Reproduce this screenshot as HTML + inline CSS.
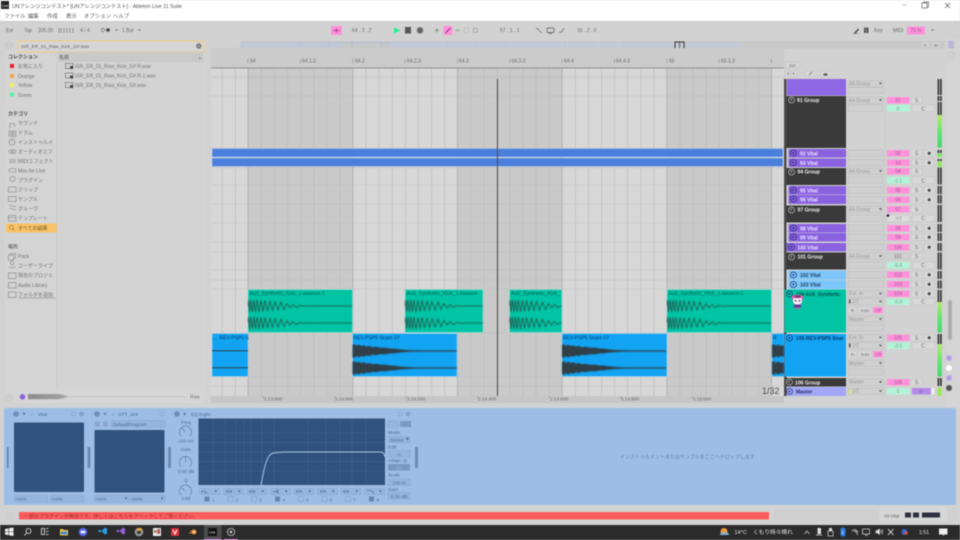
<!DOCTYPE html>
<html lang="ja"><head><meta charset="utf-8"><title>UNアレンジコンテスト - Ableton Live 11 Suite</title>
<style>
html,body{margin:0;padding:0;width:960px;height:540px;overflow:hidden;background:#d2d2d2}
svg{display:block;position:absolute;left:0;top:0;filter:blur(.45px)}
text{font-family:"Liberation Sans","Noto Sans CJK JP",sans-serif;font-size:5px;fill:#747474}
.d{fill:#5c5c5c}.h{fill:#4a4a4a;font-weight:bold;font-size:5px}.b{fill:#555;font-size:5.25px}
.m{fill:#5c5c5c;font-size:5.4px}.w{fill:#f0f0f0;font-weight:bold;font-size:5.1px}
.v{fill:#ece6ff;font-weight:bold;font-size:5.1px}.lv{fill:#1f3f60;font-weight:bold;font-size:5.1px}
.c{text-anchor:middle}.g{fill:#999}.n{fill:#6c6c6c;font-size:5px;text-anchor:middle}.pn{fill:#a2549a;font-size:5px;text-anchor:middle}
.clip{fill:#005e52;font-size:5.2px}.clipb{fill:#063f70;font-size:5px}
.dv{fill:#4c6c98;font-size:4.8px}.tb{fill:#e2e2e2;font-size:5.2px}
.f{fill:#d0d0d0;stroke:#bfbfbf;stroke-width:.6}.p{fill:#ff92da}.s{fill:#d8d8d8;stroke:#c4c4c4;stroke-width:.5}
.gr{fill:#b3f3d8}.fd{fill:#95b5e0;stroke:#86a6d3;stroke-width:.6}.r{fill:#6a6a6a;font-size:5px}.tr{fill:#6a6a6a;font-size:4.7px}
</style></head><body>
<svg width="960" height="540" viewBox="0 0 960 540" xmlns="http://www.w3.org/2000/svg">
<defs>
<pattern id="gl" x="248" y="0" width="13.08" height="10" patternUnits="userSpaceOnUse"><rect width=".7" height="10" fill="#b8b8b8"/></pattern>
<symbol id="kick" viewBox="0 -9 104 18" width="104" height="18" overflow="hidden"><path d="M0 0L.7-6 1.5 6 3-6 4.5 6 6-6 7.5 6 9-6 11 6 13-5.5 15 5.5 17-5.5 19.5 5 22-5 24.5 4.5 27-4.5 30 4 33-4 36 3.5 39-2.5 42 2 45-1.5 48 1.5 52-.5 56 .3 60 0H104" fill="none" stroke="#2f4440" stroke-width=".75"/></symbol>
<symbol id="snare" viewBox="0 -9 104 18" width="104" height="18" overflow="hidden"><path d="M0-6 2-7 4-5 6-6.5 9-5 11-5.8 14-4.5 17-5 20-3.8 24-4.2 28-3.2 33-3.4 37-2.5 42-2.4 47-1.6 53-1.1 60-.8 70-.6H104V.6H70L60 .8 53 1.1 47 1.6 42 2.4 37 2.5 33 3.4 28 3.2 24 4.2 20 3.8 17 5 14 4.5 11 5.8 9 5 6 6.5 4 5 2 7 0 6Z" fill="#33363a" opacity=".92"/></symbol>
<symbol id="ti" viewBox="0 0 8 8" width="8" height="8"><circle cx="4" cy="4" r="3" fill="none" stroke="#27306f" stroke-width=".7"/><path d="M3.2 2.6L5.3 4 3.2 5.4Z" fill="#27306f"/></symbol>
<symbol id="tg" viewBox="0 0 8 8" width="8" height="8"><circle cx="4" cy="4" r="3" fill="none" stroke="#c4c4c4" stroke-width=".7"/><path d="M2.8 3H5M3.5 3V5.2" stroke="#c4c4c4" stroke-width=".6" fill="none"/></symbol>
<linearGradient id="mt" x1="0" y1="0" x2="0" y2="1"><stop offset="0" stop-color="#b6e86a"/><stop offset=".6" stop-color="#56e470"/><stop offset="1" stop-color="#47d66e"/></linearGradient>
<linearGradient id="pv" x1="0" y1="0" x2="1" y2="0"><stop offset="0" stop-color="#8d8d8d"/><stop offset=".8" stop-color="#a0a0a0"/><stop offset="1" stop-color="#b8b8b8"/></linearGradient>
</defs>

<!-- base -->
<rect width="960" height="540" fill="#d2d2d2"/>
<rect width="960" height="21" fill="#fff"/><rect y="21" width="960" height="1" fill="#c8c8c8"/>
<rect x="1" y="1" width="8" height="8" fill="#222"/><text x="2" y="7" style="font-size:3.5px;fill:#eee">Live</text>
<text x="12" y="8" class="b">UNアレンジコンテスト* [UNアレンジコンテスト] - Ableton Live 11 Suite</text>
<text x="4" y="18" class="m">ファイル</text><text x="28" y="18" class="m">編集</text><text x="47" y="18" class="m">作成</text><text x="66" y="18" class="m">表示</text><text x="84" y="18" class="m">オプション</text><text x="113" y="18" class="m">ヘルプ</text>
<path d="M902 5h5" stroke="#bbb" stroke-width=".8"/><path d="M922 3h5v5h-5zM923.500 3V2h5v5h-1.500" fill="none" stroke="#666" stroke-width=".7"/><path d="M945 3l5 5M950 3l-5 5" stroke="#666" stroke-width=".8"/>

<!-- control bar -->
<text x="6" y="32" class="r">Ext</text><text x="24" y="32" class="r">Tap</text><text x="38" y="32" class="r">205.00</text>
<path d="M59 28v5M61 28v5M64 28v5M67 28v5M70 28v5M73 28v5" stroke="#777" stroke-width=".7"/>
<text x="80" y="32" class="r">4  /  4</text><circle cx="103" cy="30" r="1.600" fill="none" stroke="#666" stroke-width=".6"/><circle cx="108" cy="30" r="1.800" fill="#444"/><path d="M115 29.500h3l-1.500 1.500z" fill="#666"/>
<text x="122" y="32" class="r">1 Bar</text><path d="M138 29.500h3l-1.500 1.500z" fill="#666"/>
<rect x="331" y="26" width="11" height="9" class="p"/><path d="M333 30.500h7M336.500 28v5" stroke="#a03088" stroke-width=".7"/>
<text x="352" y="32" class="r">64 .  3 .  2</text>
<path d="M394 27.500l6.500 3-6.500 3z" fill="#22f08a"/><rect x="405" y="27" width="6" height="6.500" fill="#555"/><circle cx="420" cy="30.300" r="3.200" fill="#666"/>
<path d="M434.500 30.300h4.500M436.800 28v4.500" stroke="#777" stroke-width=".7"/>
<rect x="443.500" y="26" width="9" height="9" class="p"/><path d="M445.500 33l5-5" stroke="#8a3080" stroke-width="1"/>
<path d="M455 30.300h5M457.500 28.500v3.600" stroke="#999" stroke-width=".6"/><rect x="464" y="28" width="4.500" height="4.500" fill="none" stroke="#aaa" stroke-width=".5" stroke-dasharray="1 .6"/><circle cx="475.500" cy="30.300" r="2.200" fill="none" stroke="#888" stroke-width=".6"/>
<text x="500" y="32" class="r">57 .  1 .  1</text><path d="M536 28.500q2 0 3 2t3 2" fill="none" stroke="#666" stroke-width=".7"/><rect x="547" y="28" width="7" height="4.500" rx="1" fill="none" stroke="#555" stroke-width=".7"/><path d="M549 32.500l1.500 1.500 1.500-1.500" fill="none" stroke="#555" stroke-width=".6"/><path d="M559 32.500q3 0 3.500-2t2-2" fill="none" stroke="#666" stroke-width=".7"/>
<text x="577" y="32" class="r">16 .  2 .  0</text>
<path d="M854 33l4-4.500 1 1-4 4.500z" fill="#444"/><path d="M853 33.500h6" stroke="#666" stroke-width=".5"/><rect x="864" y="27.500" width="4.500" height="5.500" fill="#555"/><path d="M866.200 27.500v5.500" stroke="#ddd" stroke-width=".4"/><text x="874" y="32" class="r">Key</text><text x="893" y="32" class="r">MIDI</text>
<rect x="907" y="26.500" width="18" height="8" class="p"/><text x="916" y="32.200" class="c pn">79 %</text><path d="M931 29.500h3l-1.500 1.500z" fill="#666"/>

<!-- browser -->
<rect x="5" y="40" width="201" height="363" rx="2" fill="#d4d4d4"/>
<circle cx="9" cy="45" r="4" fill="#cdcdcd" stroke="#c5c5c5" stroke-width=".5"/>
<rect x="18" y="41" width="186" height="11" fill="#d6d6d6" stroke="#f5c77e" stroke-width="1"/>
<text x="21" y="48" style="fill:#5e5e5e;font-size:4.800px">ISR_ER_01_Raw_Kick_G#.wav</text><circle cx="198.800" cy="46" r="2.700" fill="#777"/><path d="M197.800 45l2 2M199.800 45l-2 2" stroke="#ddd" stroke-width=".5"/>
<rect x="57" y="52" width="147" height="336" fill="#d3d3d3"/><rect x="56.500" y="52" width=".6" height="336" fill="#c6c6c6"/>
<rect x="58" y="52" width="146" height="10" fill="#c9c9c9"/><text x="59" y="59" class="h" style="font-weight:normal">名前</text><path d="M198.500 59h3l-1.500-2.500z" fill="#999"/>
<g fill="none" stroke="#666" stroke-width=".6"><rect x="65.500" y="63.500" width="7.500" height="5"/><rect x="65.500" y="73" width="7.500" height="5"/><rect x="65.500" y="82.500" width="7.500" height="5"/></g>
<g fill="#444"><rect x="70" y="66" width="3" height="3"/><rect x="70" y="75.500" width="3" height="3"/><rect x="70" y="85" width="3" height="3"/></g>
<text x="75" y="68">ISR_ER_01_Raw_Kick_G# R.wav</text><text x="75" y="77.500">ISR_ER_01_Raw_Kick_G# R-1.wav</text><text x="75" y="87">ISR_ER_01_Raw_Kick_G#.wav</text>
<text x="8" y="58.500" class="h">コレクション</text>
<rect x="10" y="64" width="4" height="4" fill="#ee1c24"/><rect x="10" y="74" width="4" height="4" fill="#f2a64c"/><rect x="10" y="83" width="4" height="4" fill="#f5ec5a"/><rect x="10" y="92.500" width="4" height="4" fill="#4ff5a0"/>
<text x="18" y="68">お気に入り</text><text x="18" y="78">Orange</text><text x="18" y="87">Yellow</text><text x="18" y="97">Green</text>
<text x="8" y="115.500" class="h">カテゴリ</text>
<text x="18" y="125">サウンド</text><text x="18" y="134.500">ドラム</text><text x="18" y="144">インストゥルメ</text><text x="18" y="153.500">オーディオエフ</text><text x="18" y="163">MIDIエフェクト</text><text x="18" y="172.500">Max for Live</text><text x="18" y="182">プラグイン</text><text x="18" y="191.500">クリップ</text><text x="18" y="201">サンプル</text><text x="18" y="210.500">グルーヴ</text><text x="18" y="220">テンプレート</text>
<rect x="6" y="223.500" width="50.500" height="9" fill="#fbc368"/><text x="18" y="229.800" style="fill:#6e5628">すべての結果</text><circle cx="11.500" cy="227.500" r="2" fill="none" stroke="#8a6e30" stroke-width=".6"/><path d="M13 229l1.500 1.500" stroke="#8a6e30" stroke-width=".6"/>
<g fill="none" stroke="#808080" stroke-width=".6">
<path d="M10 123.500v4M10 123.500h4.500v3M9 127.500h1.500M13.500 126.500h1.500"/>
<path d="M9 131h3v2H9zM13 131h3v2h-3zM9 134.500h3v2H9zM13 134.500h3v2h-3z"/>
<circle cx="12" cy="142" r="3"/><path d="M12 140v2"/>
<ellipse cx="12.500" cy="151.500" rx="3.500" ry="2"/><circle cx="12.500" cy="151.500" r="1"/>
<path d="M9 159.500h7M9 161h7M9 162.500h7"/>
<rect x="9" y="168.500" width="7" height="3.500" rx="1.700"/>
<circle cx="12.500" cy="179" r="2.600"/>
<rect x="8.500" y="187" width="7.500" height="5"/><rect x="8.500" y="196.500" width="7.500" height="5"/>
<path d="M9 206q2-1.500 3.500 0t3.500 0M9 209q2-1.500 3.500 0t3.500 0"/>
<rect x="8.500" y="215.500" width="7.500" height="5.500"/><path d="M8.500 217.500h7.500"/>
<rect x="8.500" y="255" width="5" height="5"/><path d="M10 255v-1.500h5.500v5h-2"/>
<circle cx="12.200" cy="263" r="1.800"/><path d="M9 267.500h6.500"/>
<rect x="8.500" y="273" width="7.500" height="5.500"/><rect x="8.500" y="282.500" width="7.500" height="5.500"/><rect x="8.500" y="292" width="7.500" height="5.500"/>
</g>
<text x="8" y="248.500" class="h" style="font-weight:normal">場所</text>
<text x="18" y="258">Pack</text><text x="18" y="267.500">ユーザーライブ</text><text x="18" y="277">現在のプロジェ</text><text x="18" y="287">Audio Library</text><text x="18" y="296.500">フォルダを追加</text><path d="M18 298h37.500" stroke="#808080" stroke-width=".5"/>
<!-- preview -->
<circle cx="9" cy="398" r="4" fill="#cfcfcf" stroke="#c8c8c8" stroke-width=".5"/>
<rect x="18" y="392" width="186" height="11" fill="#d6d6d6"/><circle cx="22.500" cy="396.800" r="2.800" fill="#8c66d8"/>
<path d="M28 394h30l5 .8 4 1.200 3 .6-3 .6-4 1-5 1H28z" fill="url(#pv)"/><path d="M70 396.800h116" stroke="#b2b2b2" stroke-width=".5"/>
<rect x="188" y="393.500" width="14" height="6.500" fill="#dcdcdc" stroke="#c6c6c6" stroke-width=".4"/><text x="195" y="398.600" class="n">Raw</text>

<!-- overview -->
<rect x="211" y="41" width="734" height="7.500" fill="#c8c8c8"/>
<rect x="211" y="41" width="30" height="7.500" fill="#d2d2d2"/>
<path d="M241 42.500H560M241 42.500V47.500M300 42.500V47.500M329 42.500V47.500M352 42.500V47.500M381.500 42.500V47.500M388 42.500V47.500M447 42.500V47.500M476 42.500V47.500M506 42.500V47.500M565 42.500V47.500M594 42.500V47.500M623 42.500V47.500M680 42.500V47.500" stroke="#9fb1d4" stroke-width=".6" fill="none"/>
<rect x="241" y="42.500" width="100" height="5" fill="#bccae2" opacity=".6"/><rect x="388" y="42.500" width="290" height="5" fill="#bfcce3" opacity=".55"/><rect x="686" y="42.500" width="55" height="5" fill="#c0cbe0" opacity=".6"/>
<rect x="675" y="42" width="9" height="6.500" fill="none" stroke="#333" stroke-width="1"/><path d="M679.500 42v6.500" stroke="#333" stroke-width=".6"/>
<rect x="921" y="42" width="8" height="6" fill="#d6d6d6" stroke="#bbb" stroke-width=".4"/><text x="925" y="47" class="n" style="font-size:4.500px">H</text><rect x="932" y="42" width="8" height="6" fill="#d6d6d6" stroke="#bbb" stroke-width=".4"/><text x="936" y="47" class="n" style="font-size:4.500px">W</text>

<!-- ruler -->
<rect x="211" y="48" width="573" height="20" fill="#cbcbcb"/>
<rect x="211" y="67.500" width="573" height="1" fill="#8f8f8f"/>
<text x="250" y="62.500" class="r">64</text><text x="302" y="62.500" class="r">64.1.3</text><text x="355" y="62.500" class="r">64.2</text><text x="407" y="62.500" class="r">64.2.3</text><text x="459" y="62.500" class="r">64.3</text><text x="511.500" y="62.500" class="r">64.3.3</text><text x="564" y="62.500" class="r">64.4</text><text x="616" y="62.500" class="r">64.4.3</text><text x="669" y="62.500" class="r">65</text><text x="721" y="62.500" class="r">65.1.3</text>
<path d="M248 59v4M300.400 59v4M352.800 59v4M405 59v4M457.400 59v4M509.800 59v4M562 59v4M614.400 59v4M666.800 59v4M719 59v4M771.500 59v4" stroke="#888" stroke-width=".6"/>

<!-- arrangement grid -->
<rect x="211" y="68.500" width="573" height="328" fill="#d7d7d7"/>
<g fill="#c9c9c9"><rect x="248" y="68.500" width="104.700" height="328"/><rect x="457.400" y="68.500" width="104.700" height="328"/><rect x="666.800" y="68.500" width="104.700" height="328"/></g>
<rect x="211" y="68.500" width="573" height="328" fill="url(#gl)" opacity=".8"/>
<rect x="211" y="75.500" width="573" height="3" fill="#a9a9a9" opacity=".15"/>
<path d="M211 96H784M211 148H784M211 167.500H784M211 185H784M211 204H784M211 223H784M211 242H784M211 252H784M211 270H784M211 280H784M211 289H784M211 333H784M211 377H784M211 386H784" stroke="#c0c0c0" stroke-width=".6"/>
<path d="M248 68.500V396M352.800 68.500V396M457.400 68.500V396M562 68.500V396M666.800 68.500V396M771.500 68.500V396" stroke="#adadad" stroke-width=".7"/>
<!-- blue clips -->
<rect x="212" y="148.500" width="571" height="8.500" fill="#4a7fdc" stroke="#c7d5ee" stroke-width=".5"/>
<rect x="212" y="158" width="571" height="8.500" fill="#4a7fdc" stroke="#c7d5ee" stroke-width=".5"/>
<!-- teal clips -->
<g fill="#00c4a4" stroke="#bfe9df" stroke-width=".5">
<rect x="248" y="289.500" width="104.500" height="43"/><rect x="405" y="289.500" width="78" height="43"/><rect x="509.500" y="289.500" width="52.500" height="43"/><rect x="667" y="289.500" width="104.500" height="43"/>
</g>
<svg x="248" y="297" width="104" height="18"><use href="#kick"/></svg><svg x="248" y="314" width="104" height="18"><use href="#kick"/></svg>
<svg x="405" y="297" width="78" height="18"><use href="#kick"/></svg><svg x="405" y="314" width="78" height="18"><use href="#kick"/></svg>
<svg x="509.500" y="297" width="52" height="18"><use href="#kick"/></svg><svg x="509.500" y="314" width="52" height="18"><use href="#kick"/></svg>
<svg x="667" y="297" width="104" height="18"><use href="#kick"/></svg><svg x="667" y="314" width="104" height="18"><use href="#kick"/></svg>
<text x="249.500" y="295" class="clip">Au5_Synthetic_Kick_1-bounce-1</text><text x="406.500" y="295" class="clip">Au5_Synthetic_Kick_1-bounce-</text><text x="511" y="295" class="clip">Au5_Synthetic_Kick_</text><text x="668.500" y="295" class="clip">Au5_Synthetic_Kick_1-bounce-1</text>
<!-- snare clips -->
<g fill="#12a4f2" stroke="#bcdff5" stroke-width=".5">
<rect x="212" y="333.500" width="36" height="43"/><rect x="352.500" y="333.500" width="104.500" height="43"/><rect x="562" y="333.500" width="105" height="43"/><rect x="772" y="333.500" width="12" height="43"/>
</g>
<rect x="212" y="350.300" width="36" height=".9" fill="#333"/><rect x="212" y="367.300" width="36" height=".9" fill="#333"/>
<svg x="352.500" y="342" width="104" height="18"><use href="#snare"/></svg><svg x="352.500" y="359" width="104" height="18"><use href="#snare"/></svg>
<svg x="562" y="342" width="105" height="18"><use href="#snare"/></svg><svg x="562" y="359" width="105" height="18"><use href="#snare"/></svg>
<svg x="772" y="342" width="12" height="18"><use href="#snare"/></svg><svg x="772" y="359" width="12" height="18"><use href="#snare"/></svg>
<text x="214" y="339.500" class="clipb">... REV-PSP5 S</text><text x="353.500" y="339.500" class="clipb">REV-PSP5 Snare 07</text><text x="563" y="339.500" class="clipb">REV-PSP5 Snare 07</text><text x="773" y="339.500" class="clipb">R</text>
<!-- playhead -->
<rect x="497" y="79" width="1" height="317" fill="#4c4c4c"/>
<!-- time ruler -->
<rect x="211" y="396" width="573" height="7" fill="#c6c6c6"/>
<text x="264" y="400.500" class="tr">1:13:800</text><text x="335" y="400.500" class="tr">1:14:000</text><text x="407" y="400.500" class="tr">1:14:200</text><text x="478" y="400.500" class="tr">1:14:400</text><text x="550" y="400.500" class="tr">1:14:600</text><text x="621" y="400.500" class="tr">1:14:800</text><text x="693" y="400.500" class="tr">1:15:000</text>
<path d="M263.500 396v3M335 396v3M406.500 396v3M478 396v3M549.500 396v3M621 396v3M692.500 396v3" stroke="#888" stroke-width=".5"/>
<text x="762" y="394" style="font-size:9px;fill:#4a4a4a">1/32</text>

<!-- track headers -->
<rect x="784" y="79" width="2.500" height="317" fill="#4a4a4a"/>
<rect x="785" y="62" width="15" height="6" rx="3" fill="#d8d8d8" stroke="#bbb" stroke-width=".5"/><text x="792.500" y="66.800" class="n" style="font-size:4.300px">Set</text>
<g fill="#d8d8d8" stroke="#bfbfbf" stroke-width=".4"><rect x="785" y="71" width="5" height="5"/><rect x="791.500" y="71" width="5" height="5"/><rect x="805" y="71" width="11" height="5"/><rect x="820" y="71" width="11" height="5"/></g>
<path d="M788.500 72.500l-1.500 1 1.500 1zM793 72.500l1.500 1-1.500 1z" fill="#555"/><path d="M809 75l3-3" stroke="#555" stroke-width=".6"/><path d="M823.500 75.500v-2h4v2z" fill="#555"/>
<rect x="787" y="79" width="59" height="16.500" fill="#8c68e4"/>
<rect x="786.500" y="96" width="59.500" height="52" fill="#3a3a3a"/>
<use href="#tg" x="787.500" y="96"/><text x="797" y="102" class="w">91 Group</text>
<g fill="#8a62e0"><rect x="788.500" y="149" width="57.500" height="8.500"/><rect x="788.500" y="158.500" width="57.500" height="8.500"/><rect x="788.500" y="186" width="57.500" height="8.500"/><rect x="788.500" y="195" width="57.500" height="9"/><rect x="788.500" y="224" width="57.500" height="8.500"/><rect x="788.500" y="233" width="57.500" height="8.500"/><rect x="786.500" y="243" width="59.500" height="8.500"/></g>
<g fill="#3a3a3a"><rect x="786.500" y="168" width="59.500" height="17"/><rect x="786.500" y="205.500" width="59.500" height="17"/><rect x="786.500" y="252.500" width="59.500" height="17"/></g>
<g fill="#7cc6fb"><rect x="788.500" y="270.500" width="57.500" height="9"/><rect x="788.500" y="280" width="57.500" height="9"/></g>
<rect x="784.500" y="289.500" width="61.500" height="43" fill="#00c4a4"/>
<rect x="784.500" y="334" width="61.500" height="42.500" fill="#12a4f2"/>
<rect x="786.500" y="378" width="59.500" height="8.500" fill="#3a3a3a"/>
<rect x="786.500" y="387" width="59.500" height="9" fill="#a2a8f8"/>
<use href="#ti" x="789.500" y="149"/><text x="800" y="155.300" class="v">92 Vital</text>
<use href="#ti" x="789.500" y="158.500"/><text x="800" y="164.800" class="v">93 Vital</text>
<use href="#tg" x="787.500" y="168"/><text x="797.500" y="173.500" class="w">94 Group</text>
<use href="#ti" x="789.500" y="186"/><text x="800" y="192.300" class="v">95 Vital</text>
<use href="#ti" x="789.500" y="195"/><text x="800" y="201.500" class="v">96 Vital</text>
<use href="#tg" x="787.500" y="206"/><text x="797.500" y="211.500" class="w">97 Group</text>
<use href="#ti" x="789.500" y="224"/><text x="800" y="230.300" class="v">98 Vital</text>
<use href="#ti" x="789.500" y="233"/><text x="800" y="239.300" class="v">99 Vital</text>
<use href="#ti" x="787.500" y="243"/><text x="797.500" y="249.300" class="v">100 Vital</text>
<use href="#tg" x="787.500" y="253"/><text x="797.500" y="258.500" class="w">101 Group</text>
<use href="#ti" x="789.500" y="271"/><text x="800" y="277" class="lv">102 Vital</text>
<use href="#ti" x="789.500" y="280.500"/><text x="800" y="286.500" class="lv">103 Vital</text>
<use href="#ti" x="785.500" y="290"/><text x="796" y="295.800" style="fill:#044f48;font-weight:bold;font-size:5px">104 Au5_Synthetic</text>
<use href="#ti" x="785.500" y="334"/><text x="796" y="340" class="lv" style="fill:#0c3a6a">105 REV-PSP5 Snar</text>
<use href="#tg" x="785.500" y="378"/><text x="795" y="384.500" class="w">106 Group</text>
<use href="#ti" x="785.500" y="387.500"/><text x="796" y="393.500" class="lv" style="fill:#27306f">Master</text>
<!-- mascot -->
<rect x="791.500" y="295" width="12" height="6" rx="3" fill="#d85caf"/><circle cx="797.500" cy="300.500" r="4.600" fill="#f8eaf2"/><rect x="794.500" y="295.500" width="6" height="2.500" fill="#8c2f78"/><circle cx="795.800" cy="300.800" r=".8" fill="#4a2a5a"/><circle cx="799.400" cy="300.800" r=".8" fill="#4a2a5a"/><rect x="794" y="304.500" width="7" height="3" fill="#6a3a9a"/><rect x="795" y="307.500" width="2" height="1.500" fill="#e060b0"/><rect x="798" y="307.500" width="2" height="1.500" fill="#e060b0"/>

<!-- mixer columns -->
<rect class="f" x="848" y="81" width="35" height="6"/><rect class="f" x="848" y="87.500" width="35" height="6"/>
<rect class="f" x="848" y="97" width="35" height="6.500"/><rect class="f" x="848" y="105" width="35" height="6.500"/>
<rect class="f" x="848" y="150" width="35" height="6.500"/><rect class="f" x="848" y="159.500" width="35" height="6.500"/>
<rect class="f" x="848" y="168" width="35" height="6.500"/><rect class="f" x="848" y="177" width="35" height="6.500"/>
<rect class="f" x="848" y="187" width="35" height="6.500"/><rect class="f" x="848" y="196.500" width="35" height="6.500"/>
<rect class="f" x="848" y="206" width="35" height="6.500"/><rect class="f" x="848" y="215" width="35" height="6.500"/>
<rect class="f" x="848" y="225" width="35" height="6.500"/><rect class="f" x="848" y="234" width="35" height="6.500"/><rect class="f" x="848" y="244" width="35" height="6.500"/>
<rect class="f" x="848" y="253" width="35" height="6.500"/><rect class="f" x="848" y="262" width="35" height="6.500"/>
<rect class="f" x="848" y="271.500" width="35" height="6.500"/><rect class="f" x="848" y="281" width="35" height="6.500"/>
<rect class="f" x="848" y="290.500" width="35" height="6.500"/><rect class="f" x="848" y="298.500" width="35" height="6.500"/><rect class="f" x="848" y="316" width="35" height="6.500"/><rect class="f" x="848" y="325" width="35" height="6"/>
<rect class="f" x="848" y="334.500" width="35" height="6.500"/><rect class="f" x="848" y="342.500" width="35" height="6.500"/><rect class="f" x="848" y="360" width="35" height="6.500"/><rect class="f" x="848" y="369" width="35" height="6"/>
<rect class="f" x="848" y="379" width="35" height="6.500"/><rect class="f" x="848" y="388" width="35" height="6.500"/>
<text x="849" y="85.600" class="g">All-Group</text><text x="849" y="102" class="g">All-Group</text><text x="849" y="173" class="g">All-Group</text><text x="849" y="211" class="g">All-Group</text><text x="849" y="258" class="g">All-Group</text>
<text x="849" y="295.200" class="g">Ext. In</text><text x="849" y="339.200" class="g">Ext. In</text><text x="852" y="303.200" class="g">1/2</text><text x="852" y="347.200" class="g">1/2</text><text x="849" y="321" class="g">Master</text><text x="849" y="365" class="g">Master</text><text x="849" y="383.700" class="g">Master</text><text x="852" y="392.700" class="g">1/2</text>
<path d="M879 82.800h3l-1.500 2zM879 99.200h3l-1.500 2zM879 170.200h3l-1.500 2zM879 208.200h3l-1.500 2zM879 255.200h3l-1.500 2zM879 292.700h3l-1.500 2zM879 300.700h3l-1.500 2zM879 318.200h3l-1.500 2zM879 336.700h3l-1.500 2zM879 344.700h3l-1.500 2zM879 362.200h3l-1.500 2zM879 381.200h3l-1.500 2zM879 390.200h3l-1.500 2z" fill="#555"/>
<path d="M849 299.500h1.500v4H849zM849 343.500h1.500v4H849z" fill="#555"/><rect x="849" y="389" width="2" height="5" fill="#c8ee70"/>
<!-- In Auto Off -->
<rect class="s" x="848" y="307" width="9" height="6.500"/><rect class="s" x="858" y="307" width="14" height="6.500"/><rect class="p" x="873" y="307" width="10" height="6.500"/><text x="852.500" y="312" class="n" style="font-size:4.500px">In</text><text x="865" y="312" class="n" style="font-size:4.500px">Auto</text><text x="878" y="312" class="pn" style="font-size:4.500px">Off</text>
<rect class="s" x="848" y="351" width="9" height="6.500"/><rect class="s" x="858" y="351" width="14" height="6.500"/><rect class="p" x="873" y="351" width="10" height="6.500"/><text x="852.500" y="356" class="n" style="font-size:4.500px">In</text><text x="865" y="356" class="n" style="font-size:4.500px">Auto</text><text x="878" y="356" class="pn" style="font-size:4.500px">Off</text>
<!-- pink -->
<g class="p">
<rect x="887" y="97" width="22.500" height="6.500"/><rect x="887" y="150" width="22.500" height="6.500"/><rect x="887" y="159.500" width="22.500" height="6.500"/><rect x="887" y="168" width="22.500" height="6.500"/><rect x="887" y="187" width="22.500" height="6.500"/><rect x="887" y="196.500" width="22.500" height="6.500"/><rect x="887" y="206" width="22.500" height="6.500"/><rect x="887" y="225" width="22.500" height="6.500"/><rect x="887" y="234" width="22.500" height="6.500"/><rect x="887" y="244" width="22.500" height="6.500"/><rect x="887" y="271.500" width="22.500" height="6.500"/><rect x="887" y="281" width="22.500" height="6.500"/><rect x="887" y="290.500" width="22.500" height="6.500"/><rect x="887" y="334.500" width="22.500" height="6.500"/><rect x="887" y="379" width="22.500" height="6.500"/>
</g>
<rect x="887" y="253" width="22.500" height="6.500" fill="#d0d0d0" stroke="#bfbfbf" stroke-width=".4"/>
<text x="898" y="102" class="pn">91</text><text x="898" y="155" class="pn">92</text><text x="898" y="164.500" class="pn">93</text><text x="898" y="173" class="pn">94</text><text x="898" y="192" class="pn">95</text><text x="898" y="201.500" class="pn">96</text><text x="898" y="211" class="pn">97</text><text x="898" y="230" class="pn">98</text><text x="898" y="239" class="pn">99</text><text x="898" y="249" class="pn">100</text><text x="898" y="258" class="n">101</text><text x="898" y="276.500" class="pn">102</text><text x="898" y="286" class="pn">103</text><text x="898" y="295.500" class="pn">104</text><text x="898" y="339.500" class="pn">105</text><text x="898" y="384" class="pn">106</text>
<!-- S buttons -->
<rect class="s" x="911" y="97" width="11" height="6.500"/><rect class="s" x="911" y="150" width="11" height="6.500"/><rect class="s" x="911" y="159.500" width="11" height="6.500"/><rect class="s" x="911" y="168" width="11" height="6.500"/><rect class="s" x="911" y="187" width="11" height="6.500"/><rect class="s" x="911" y="196.500" width="11" height="6.500"/><rect class="s" x="911" y="206" width="11" height="6.500"/><rect class="s" x="911" y="225" width="11" height="6.500"/><rect class="s" x="911" y="234" width="11" height="6.500"/><rect class="s" x="911" y="244" width="11" height="6.500"/><rect class="s" x="911" y="253" width="11" height="6.500"/><rect class="s" x="911" y="271.500" width="11" height="6.500"/><rect class="s" x="911" y="281" width="11" height="6.500"/><rect class="s" x="911" y="290.500" width="11" height="6.500"/><rect class="s" x="911" y="334.500" width="11" height="6.500"/><rect class="s" x="911" y="379" width="11" height="6.500"/>
<text x="916.500" y="102" class="n">S</text><text x="916.500" y="155" class="n">S</text><text x="916.500" y="164.500" class="n">S</text><text x="916.500" y="173" class="n">S</text><text x="916.500" y="192" class="n">S</text><text x="916.500" y="201.500" class="n">S</text><text x="916.500" y="211" class="n">S</text><text x="916.500" y="230" class="n">S</text><text x="916.500" y="239" class="n">S</text><text x="916.500" y="249" class="n">S</text><text x="916.500" y="258" class="n">S</text><text x="916.500" y="276.500" class="n">S</text><text x="916.500" y="286" class="n">S</text><text x="916.500" y="295.500" class="n">S</text><text x="916.500" y="339.500" class="n">S</text><text x="916.500" y="384" class="n">S</text>
<!-- arm buttons -->
<rect class="s" x="924" y="150" width="10.500" height="6.500"/><rect class="s" x="924" y="159.500" width="10.500" height="6.500"/><rect class="s" x="924" y="187" width="10.500" height="6.500"/><rect class="s" x="924" y="196.500" width="10.500" height="6.500"/><rect class="s" x="924" y="225" width="10.500" height="6.500"/><rect class="s" x="924" y="234" width="10.500" height="6.500"/><rect class="s" x="924" y="244" width="10.500" height="6.500"/><rect class="s" x="924" y="271.500" width="10.500" height="6.500"/><rect class="s" x="924" y="281" width="10.500" height="6.500"/><rect class="s" x="924" y="290.500" width="10.500" height="6.500"/><rect class="s" x="924" y="334.500" width="10.500" height="6.500"/>
<g fill="#444"><circle cx="929.200" cy="153.300" r="1.500"/><circle cx="929.200" cy="162.800" r="1.500"/><circle cx="929.200" cy="190.300" r="1.500"/><circle cx="929.200" cy="199.800" r="1.500"/><circle cx="929.200" cy="228.300" r="1.500"/><circle cx="929.200" cy="237.300" r="1.500"/><circle cx="929.200" cy="247.300" r="1.500"/><circle cx="929.200" cy="274.800" r="1.500"/><circle cx="929.200" cy="284.300" r="1.500"/><circle cx="929.200" cy="293.800" r="1.500"/><circle cx="929.200" cy="337.800" r="1.500"/></g>
<!-- vol + C -->
<g class="gr"><rect x="887" y="105" width="22.500" height="6.500"/><rect x="887" y="177" width="22.500" height="6.500"/><rect x="887" y="262" width="22.500" height="6.500"/><rect x="887" y="298.500" width="22.500" height="6.500"/><rect x="887" y="342.500" width="22.500" height="6.500"/><rect x="887" y="388" width="22.500" height="6.500"/></g>
<rect x="887" y="215" width="22.500" height="6.500" fill="#ddd" stroke="#c0c0c0" stroke-width=".4"/><circle cx="888" cy="215.500" r="1.300" fill="#2a0a40"/>
<rect class="s" x="912" y="105" width="22.500" height="6.500"/><rect class="s" x="912" y="177" width="22.500" height="6.500"/><rect class="s" x="912" y="215" width="22.500" height="6.500"/><rect class="s" x="912" y="262" width="22.500" height="6.500"/><rect class="s" x="912" y="298.500" width="22.500" height="6.500"/><rect class="s" x="912" y="342.500" width="22.500" height="6.500"/>
<rect x="912" y="388" width="19" height="6.500" fill="#b589e8"/><rect x="931" y="388" width="3.500" height="6.500" fill="#eee"/>
<text x="898" y="110.300" class="n" style="fill:#6fa08d">0</text><text x="898" y="182.300" class="n" style="fill:#6fa08d">-1.1</text><text x="898" y="220" class="n" style="fill:#999">-inf</text><text x="898" y="267" class="n" style="fill:#6fa08d">-5.6</text><text x="898" y="303.500" class="n" style="fill:#6fa08d">-5.9</text><text x="898" y="347.500" class="n" style="fill:#6fa08d">-3.5</text><text x="898" y="393" class="n" style="fill:#6fa08d">0</text><text x="921" y="393" class="n" style="fill:#7d5fa8">0</text>
<text x="923" y="110.300" class="n">C</text><text x="923" y="182.300" class="n">C</text><text x="923" y="220" class="n">C</text><text x="923" y="267" class="n">C</text><text x="923" y="303.500" class="n">C</text><text x="923" y="347.500" class="n">C</text>
<!-- meters -->
<g fill="#3f3f3f">
<rect x="937.500" y="79" width="1.800" height="16"/><rect x="940" y="79" width="1.800" height="16"/>
<rect x="937.500" y="96" width="1.800" height="5"/><rect x="940" y="96" width="1.800" height="5"/><rect x="937.500" y="102" width="1.800" height="14"/><rect x="940" y="102" width="1.800" height="14"/>
<rect x="937.500" y="167.500" width="1.800" height="17"/><rect x="940" y="167.500" width="1.800" height="17"/><rect x="937.500" y="186" width="1.800" height="8"/><rect x="940" y="186" width="1.800" height="8"/><rect x="937.500" y="195" width="1.800" height="8.500"/><rect x="940" y="195" width="1.800" height="8.500"/><rect x="937.500" y="205" width="1.800" height="17"/><rect x="940" y="205" width="1.800" height="17"/><rect x="937.500" y="224" width="1.800" height="8"/><rect x="940" y="224" width="1.800" height="8"/><rect x="937.500" y="233" width="1.800" height="8"/><rect x="940" y="233" width="1.800" height="8"/><rect x="937.500" y="243" width="1.800" height="8"/><rect x="940" y="243" width="1.800" height="8"/><rect x="937.500" y="252.500" width="1.800" height="17"/><rect x="940" y="252.500" width="1.800" height="17"/><rect x="937.500" y="271" width="1.800" height="8"/><rect x="940" y="271" width="1.800" height="8"/><rect x="937.500" y="280.500" width="1.800" height="8"/><rect x="940" y="280.500" width="1.800" height="8"/><rect x="937.500" y="290" width="1.800" height="12"/><rect x="940" y="290" width="1.800" height="12"/><rect x="937.500" y="334" width="1.800" height="10"/><rect x="940" y="334" width="1.800" height="10"/><rect x="937.500" y="378" width="1.800" height="8"/><rect x="940" y="378" width="1.800" height="8"/><rect x="937.500" y="150" width="1.800" height="3"/><rect x="940" y="150" width="1.800" height="3"/><rect x="937.500" y="159" width="1.800" height="2"/><rect x="940" y="159" width="1.800" height="2"/>
</g>
<rect x="937.500" y="115" width="4.300" height="32.500" fill="url(#mt)"/><rect x="937.500" y="153.500" width="4.300" height="3.500" fill="#7ce85f"/><rect x="937.500" y="161.500" width="4.300" height="5.500" fill="#8ee85c"/>
<rect x="937.500" y="302" width="4.300" height="30.500" fill="url(#mt)"/><rect x="937.500" y="344" width="4.300" height="32.500" fill="url(#mt)"/><rect x="937.500" y="387.500" width="4.300" height="8.500" fill="#9ce85f"/>
<path d="M885 80V396" stroke="#c4c4c4" stroke-width=".5"/>
<!-- right rail -->
<rect x="946" y="38" width="14" height="370" fill="#d4d4d4"/>
<path d="M948 41.500h6M948 43.500h6M948 45.500h6M948 47.500h6" stroke="#a79ad8" stroke-width="1"/><circle cx="951" cy="55" r="4" fill="#d0d0d0" stroke="#c8c8c8" stroke-width=".5"/>
<rect x="948" y="300" width="4" height="40" rx="2" fill="#adadad"/>
<circle cx="949" cy="358" r="3" fill="#b59fdf" stroke="#c7c7ea" stroke-width=".7"/><circle cx="949" cy="368" r="3" fill="#fff"/><circle cx="949" cy="378" r="3" fill="#b59fdf" stroke="#c7c7ea" stroke-width=".7"/><circle cx="949" cy="388" r="3" fill="#555"/>

<!-- device view -->
<rect x="4" y="408" width="952" height="97" rx="1" fill="#9dbde6"/>
<g fill="#6f8db6"><circle cx="16" cy="414" r="2.800"/><circle cx="97" cy="414" r="2.800"/><circle cx="177" cy="414" r="2.800"/></g>
<path d="M22.500 413h3l-1.500 2zM103.500 413h3l-1.500 2zM184 412.500v3l2-1.500zM30.500 416l2.500-3M112 416l2.500-3" stroke="#5f7ea8" stroke-width=".5" fill="#5f7ea8"/>
<text x="38" y="416" class="dv">Vital</text><text x="118" y="416" class="dv">OTT_x64</text><text x="191" y="416" class="dv">EQ Eight</text>
<circle cx="73.500" cy="414" r="2" fill="none" stroke="#7c9bc4" stroke-width=".5"/><circle cx="81.500" cy="414" r="2" fill="#8aa9d2" stroke="#6f8db6" stroke-width=".5"/><circle cx="162" cy="414" r="2" fill="none" stroke="#7c9bc4" stroke-width=".5"/><circle cx="400" cy="414" r="2" fill="none" stroke="#7c9bc4" stroke-width=".5"/><circle cx="408" cy="414" r="2" fill="#8aa9d2" stroke="#6f8db6" stroke-width=".5"/>
<rect x="14" y="422.500" width="70" height="69.500" rx="1" fill="#2f527e"/>
<rect class="fd" x="14.500" y="495.500" width="33" height="6.500"/><rect class="fd" x="50.500" y="495.500" width="33" height="6.500"/><text x="16" y="500.700" class="dv">none</text><text x="52" y="500.700" class="dv">none</text>
<rect x="7" y="447" width="1.500" height="21" fill="#4f71a0" opacity=".8"/><rect x="87.500" y="447" width="3" height="21" fill="#6a8bb8"/><rect x="168" y="447" width="3" height="21" fill="#6a8bb8"/><rect x="415" y="447" width="3" height="21" fill="#6a8bb8"/>
<rect x="95" y="421.500" width="5" height="5" fill="#87a7d2"/><rect x="103" y="421.500" width="5" height="5" fill="#87a7d2"/><rect class="fd" x="112" y="420.500" width="53" height="6.500"/><text x="113" y="425.800" class="dv">DefaultProgram</text>
<rect x="94.500" y="430" width="70" height="62.500" rx="1" fill="#2f527e"/>
<rect class="fd" x="94.500" y="495.500" width="34.500" height="6.500"/><rect class="fd" x="130.500" y="495.500" width="34.500" height="6.500"/><text x="96" y="500.700" class="dv">none</text><text x="132" y="500.700" class="dv">none</text><path d="M124.500 497.500h3l-1.500 2zM160.500 497.500h3l-1.500 2z" fill="#4f6d97"/>
<!-- EQ knobs -->
<text x="186" y="424" class="dv c">Freq</text><text x="186" y="442.500" class="dv c">160 Hz</text><text x="186" y="451" class="dv c">Gain</text><text x="186" y="473" class="dv c">0.00 dB</text><text x="186" y="482" class="dv c">Q</text><text x="186" y="500" class="dv c">0.66</text>
<g fill="none" stroke="#5d7ca7" stroke-width=".7"><path d="M181 436a6 6 0 1 1 9 0"/><path d="M185 432l-3-4"/><path d="M181 466.500a6 6 0 1 1 9 0"/><path d="M185.500 462v-6"/><path d="M181 495a6 6 0 1 1 9 0"/><path d="M185 491l-3-3"/></g>
<!-- EQ display -->
<rect x="198.500" y="418.500" width="186.500" height="66.500" fill="#2f527e"/>
<g stroke="#5a7ba8" stroke-width=".4" opacity=".6"><path d="M213 418.500v66.500M225 418.500v66.500M236 418.500v66.500M244 418.500v66.500M251 418.500v66.500M262 418.500v66.500M274 418.500v66.500M308 418.500v66.500M326 418.500v66.500M340 418.500v66.500M352 418.500v66.500M366 418.500v66.500"/><path d="M198.500 433h186.500M198.500 442.500h186.500M198.500 452h186.500M198.500 461.500h186.500M198.500 471h186.500"/></g>
<path d="M261 485C264 470 266 455 273 453L283 452H380C383 452 384 453 385 457" fill="none" stroke="#a9c4e6" stroke-width="1"/>
<!-- EQ filters -->
<rect class="fd" x="200" y="488.500" width="20" height="6"/><rect class="fd" x="223.500" y="488.500" width="20" height="6"/><rect class="fd" x="247" y="488.500" width="20" height="6"/><rect class="fd" x="270.500" y="488.500" width="20" height="6"/><rect class="fd" x="294" y="488.500" width="20" height="6"/><rect class="fd" x="317.500" y="488.500" width="20" height="6"/><rect class="fd" x="341" y="488.500" width="20" height="6"/><rect class="fd" x="364.500" y="488.500" width="20" height="6"/>
<path d="M202 493v-2h3v2h3M226 491.500q3-2 6 0q-3 2-6 0M249 491.500q3-2 6 0q-3 2-6 0M273 491.500h2l3-1.500v3l-3-1.500M296 491.500q3-2 6 0q-3 2-6 0M320 491.500q3-2 6 0q-3 2-6 0M343 491.500q3-2 6 0q-3 2-6 0M367 490.500h4l3 2.500" fill="none" stroke="#3f5f8c" stroke-width=".6"/>
<path d="M214.500 490.500h2.500l-1.250 2zM238 490.500h2.500l-1.250 2zM261.500 490.500h2.500l-1.250 2zM285 490.500h2.500l-1.250 2zM308.500 490.500h2.500l-1.250 2zM332 490.500h2.500l-1.250 2zM355.500 490.500h2.500l-1.250 2zM379 490.500h2.500l-1.250 2z" fill="#3f5f8c"/>
<rect x="204.500" y="496.500" width="5" height="5" fill="#6584ae"/><rect x="228" y="496.500" width="5" height="5" fill="none" stroke="#7796c0" stroke-width=".5"/><rect x="251.500" y="496.500" width="5" height="5" fill="none" stroke="#7796c0" stroke-width=".5"/><rect x="275" y="496.500" width="5" height="5" fill="#6584ae"/><rect x="298.500" y="496.500" width="5" height="5" fill="none" stroke="#7796c0" stroke-width=".5"/><rect x="322" y="496.500" width="5" height="5" fill="none" stroke="#7796c0" stroke-width=".5"/><rect x="345.500" y="496.500" width="5" height="5" fill="none" stroke="#7796c0" stroke-width=".5"/><rect x="369" y="496.500" width="5" height="5" fill="#6584ae"/>
<text x="212" y="501.500" class="dv">1</text><text x="235.500" y="501.500" class="dv">2</text><text x="259" y="501.500" class="dv">3</text><text x="282.500" y="501.500" class="dv">4</text><text x="306" y="501.500" class="dv">5</text><text x="329.500" y="501.500" class="dv">6</text><text x="353" y="501.500" class="dv">7</text><text x="376.500" y="501.500" class="dv">8</text>
<!-- EQ right col -->
<rect class="fd" x="388" y="421" width="10" height="6"/><rect x="400" y="421" width="11" height="6" fill="#7a99c5"/>
<text x="388" y="434" class="dv">Mode</text><rect class="fd" x="388" y="436.500" width="22" height="6"/><text x="389.500" y="441.500" class="dv">Stereo</text><path d="M406 438h3l-1.500 2.500z" fill="#3f5f8c"/>
<text x="388" y="448.500" class="dv">Edit</text><rect class="fd" x="388" y="450.500" width="22" height="6.500"/><text x="399" y="455.800" class="dv c">A</text>
<text x="388" y="462" class="dv">Adapt. Q</text><rect x="388" y="464" width="22" height="6.500" fill="#7997c3"/><text x="399" y="469.300" class="dv c" style="fill:#9dbbe3">On</text>
<text x="388" y="476.500" class="dv">Scale</text><rect class="fd" x="388" y="479" width="22" height="6.500"/><text x="399" y="484.300" class="dv c">100 %</text>
<text x="388" y="491" class="dv">Gain</text><rect class="fd" x="388" y="492.500" width="22" height="6.500"/><text x="399" y="497.800" class="dv c">0.00 dB</text>
<text x="620" y="458.500" class="dv" style="fill:#6485b3;font-size:5px">インストゥルメントまたはサンプルをここへドロップします</text>

<!-- status -->
<circle cx="9" cy="515.500" r="4" fill="#cfcfcf" stroke="#c8c8c8" stroke-width=".5"/>
<rect x="19" y="512" width="750" height="7.500" fill="#fd5d5e"/>
<text x="24" y="518" style="fill:#a02c2c;font-size:5px">一部のプラグインが無効です。詳しくはこちらをクリックしてご覧ください。</text>
<rect x="775" y="511.500" width="102" height="8" fill="#d0d0d0" stroke="#c6c6c6" stroke-width=".5"/>
<rect x="880" y="506" width="67" height="15" fill="#d6d6d6"/>
<text x="884" y="517.500" style="font-size:4.500px;fill:#5e5e5e">43-Vital</text><g fill="#2e2e42"><rect x="905" y="512.500" width="6" height="5"/><rect x="913" y="512.500" width="6" height="5"/><rect x="922" y="512.500" width="18" height="5"/></g><circle cx="952" cy="515" r="4" fill="#d2d2d2" stroke="#c8c8c8" stroke-width=".5"/>

<!-- taskbar -->
<rect y="525" width="960" height="15" fill="#2b2b2b"/>
<path d="M5 529l3.500-.5v3H5zM9 528.300l4.500-.8v4H9zM5 532h3.500v3L5 534.500zM9 532h4.500v4L9 535.300z" fill="#f2f2f2"/>
<circle cx="28.500" cy="531" r="2.500" fill="none" stroke="#eee" stroke-width=".8"/><path d="M26.500 533l-2 2.500" stroke="#eee" stroke-width=".8"/>
<path d="M41.500 528.500h3v6h-3zM46 528.500h2.500M46 531.500h2.500M46 534.500h2.500" fill="none" stroke="#eee" stroke-width=".8"/>
<path d="M60 529h3l1 1h4v5.500h-8z" fill="#f2c24a"/><rect x="61" y="531.500" width="6" height="3" fill="#3f8ed8"/>
<circle cx="83" cy="532" r="4.300" fill="#5865e8"/><rect x="80.500" y="530.800" width="5" height="2.500" rx="1" fill="#eee"/>
<path d="M98 531l2-1.500 5 5 2-1V528.500l-2-1-5 5-2-1.500z" fill="#2a9fe6"/>
<path d="M116 531l2-1.500 5 5 2-1V528.500l-2-1-5 5-2-1.500z" fill="#9460d8"/>
<circle cx="139" cy="532" r="4.300" fill="#999"/><circle cx="139" cy="532" r="2" fill="#333"/><rect x="137" y="528" width="5" height="3" fill="#dca03c"/>
<rect x="153" y="528" width="8" height="8" fill="#eee"/><rect x="154" y="530" width="3" height="3" fill="#b08a5c"/><rect x="157.500" y="529" width="2.500" height="5" fill="#a55"/>
<rect x="171" y="528" width="8" height="8" rx="1.500" fill="#e03040"/><path d="M173 530l2 4 2-4" stroke="#fff" stroke-width="1" fill="none"/>
<circle cx="194" cy="532" r="2.500" fill="#ef8f2a"/><path d="M190 531h3M189 533h3" stroke="#e8a14d" stroke-width=".7"/><circle cx="194" cy="532" r="1" fill="#eee"/>
<rect x="204" y="525" width="17.500" height="15" fill="#4c4c4c"/><rect x="204" y="539" width="17.500" height="1" fill="#d07be8"/><rect x="208" y="528" width="9" height="8" fill="#111"/><text x="209" y="533.500" style="font-size:3.500px;fill:#eee">Live</text>
<rect x="224" y="539" width="14" height="1" fill="#e07be0"/><circle cx="231" cy="532" r="3.700" fill="#333" stroke="#ddd" stroke-width=".7"/><circle cx="231" cy="532" r="1.200" fill="#ddd"/>
<circle cx="724" cy="531.500" r="3.500" fill="#f09a3a"/><path d="M720 535q0-2.500 3-2.500h3q3 0 3 2.500z" fill="#7cb3dc"/>
<text x="734.500" y="534" class="tb" style="font-size:5.500px">14°C</text><text x="753" y="534" class="tb" style="font-size:5.700px">くもり時々晴れ</text>
<path d="M804.500 534l2.500-3 2.500 3" fill="none" stroke="#ddd" stroke-width=".7"/>
<rect x="817.500" y="528" width="3.500" height="6" fill="#e0e0e0"/><path d="M816 535h6" stroke="#ddd" stroke-width=".8"/><rect x="829" y="528" width="3" height="3" fill="#ddd"/><rect x="828" y="531" width="5" height="5" fill="none" stroke="#ddd" stroke-width=".7"/>
<rect x="840.500" y="527.500" width="5" height="9" rx="2" fill="#2a7be0"/><path d="M841.500 530l2 3.500-2 .5M841.500 534l2-3.500" stroke="#eee" stroke-width=".4" fill="none"/>
<path d="M851.500 530l5 2 1 3M854 529l4 3" stroke="#ccc" stroke-width=".8" fill="none"/>
<rect x="862.500" y="529" width="7" height="5" fill="none" stroke="#ddd" stroke-width=".7"/><path d="M865 535.500h3M866 534v1.500" stroke="#ddd" stroke-width=".6"/>
<path d="M876 530.500h1.500l2-1.500v5.500l-2-1.500H876zM881 530v3.500M882.500 529v5.500" stroke="#ddd" stroke-width=".6" fill="#ddd"/>
<path d="M888 529l5.500 6M893.500 529l-5.500 6" stroke="#e8e8e8" stroke-width=".9"/>
<circle cx="904.500" cy="532" r="3" fill="#2f68d8"/><circle cx="906" cy="533" r="1.700" fill="#e0553c"/>
<text x="924" y="534" class="tb c" style="font-size:5.200px">1:51</text>
<path d="M939 528.500h8.500v6h-3l-1.500 1.500v-1.500h-4z" fill="#eee"/>
</svg>
</body></html>
